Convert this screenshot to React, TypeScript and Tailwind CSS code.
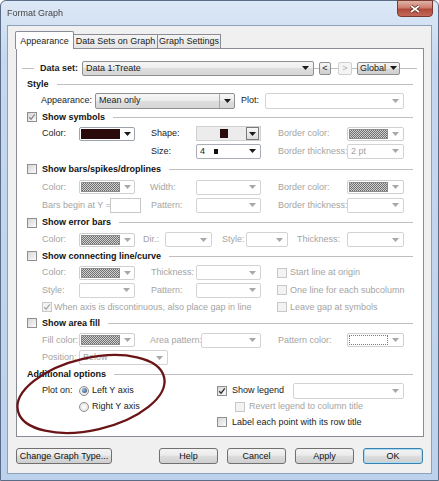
import React from "react";

type Kids = { children?: React.ReactNode };

function Arrow({ dis }: { dis?: boolean }) {
  return (
    <svg width="7" height="4" viewBox="0 0 7 4" className="shrink-0">
      <path d="M0 0H7L3.5 4Z" fill={dis ? "#a8a8a8" : "#1a1a1a"} />
    </svg>
  );
}

function Combo({ dis, size, children }: Kids & { dis?: boolean; size: string }) {
  return (
    <div
      className={`${size} shrink-0 flex items-center rounded-[2px] border pl-[3px] pr-[4px] bg-white ${
        dis ? "border-[#d3d3d3] text-[#a3a3a3]" : "border-[#a9aeb6]"
      }`}
    >
      <div className="flex-1 flex items-center min-w-0 whitespace-nowrap overflow-hidden">{children}</div>
      <Arrow dis={dis} />
    </div>
  );
}

function Swatch({ kind }: { kind: "dark" | "hatch" | "blank" }) {
  const inner =
    kind === "dark"
      ? "bg-[#2a0a0b]"
      : kind === "hatch"
      ? "border border-[#8c8c8c] bg-[repeating-conic-gradient(#707070_0_25%,#d0d0d0_0_50%)] bg-[length:2px_2px]"
      : "border border-dotted border-[#7a7a7a] bg-white";
  return (
    <div
      className={`h-[14px] w-full flex items-center rounded-[2px] border pl-[1px] bg-white ${
        kind === "dark" ? "border-[#9da3ab]" : "border-[#cfcfcf]"
      }`}
    >
      <div className={`h-[10px] w-[39px] ${inner}`} />
      <div className="flex-1 flex justify-center">
        <Arrow dis={kind !== "dark"} />
      </div>
    </div>
  );
}

function Check({ on, dis, ink = "#333" }: { on?: boolean; dis?: boolean; ink?: string }) {
  return (
    <div
      className={`w-[10px] h-[10px] shrink-0 border flex items-center justify-center ${
        dis ? "border-[#c8c8c8] bg-[#f3f3f3]" : "border-[#8f8f8f] bg-[linear-gradient(135deg,#d6d6d6,#fbfbfb)]"
      }`}
    >
      {on && (
        <svg width="8" height="8" viewBox="0 0 8 8">
          <path d="M1.2 4.2 3.1 6.2 6.8 1.4" fill="none" stroke={ink} strokeWidth="1.3" />
        </svg>
      )}
    </div>
  );
}

function Radio({ on }: { on?: boolean }) {
  return (
    <div className="w-[10px] h-[10px] shrink-0 rounded-full border border-[#8e8f8f] bg-[radial-gradient(circle,#ffffff,#dcdcdc)] flex items-center justify-center">
      {on && <div className="w-[5px] h-[5px] rounded-full bg-[radial-gradient(circle_at_35%_35%,#9ab6d8,#2c4a70)]" />}
    </div>
  );
}

function L({ w, dis, bold, children }: Kids & { w: string; dis?: boolean; bold?: boolean }) {
  return (
    <div
      className={`${w} shrink-0 whitespace-nowrap ${bold ? "font-bold" : ""} ${
        dis ? "text-[#a4a4a4]" : "text-[#1b1b1b]"
      }`}
    >
      {children}
    </div>
  );
}

function Row({ h, pl = "pl-[25px]", children }: Kids & { h: string; pl?: string }) {
  return <div className={`flex items-center ${h} ${pl}`}>{children}</div>;
}

function Heading({ h, check, ink, children }: Kids & { h: string; check?: boolean; ink?: string }) {
  return (
    <div className={`flex items-center pl-[10px] pr-[10px] ${h}`}>
      {check !== undefined && (
        <div className="mr-[5px]">
          <Check on={check} ink={ink} />
        </div>
      )}
      <span className="font-bold whitespace-nowrap text-[#111]">{children}</span>
      <div className="flex-1 h-px bg-[#bfbfbf] ml-[8px]" />
    </div>
  );
}

function Btn({ w, focus, children }: Kids & { w: string; focus?: boolean }) {
  return (
    <div
      className={`${w} h-[16px] rounded-[3px] border flex items-center justify-center text-[#111] bg-[linear-gradient(#f3f3f3,#ebebeb_45%,#dddddd_50%,#cfcfcf)] ${
        focus ? "border-[#3c7fb1] shadow-[inset_0_0_0_1px_#a6dcf5]" : "border-[#707070]"
      }`}
    >
      {children}
    </div>
  );
}

function SmallBtn({ w, dis, children }: Kids & { w: string; dis?: boolean }) {
  return (
    <div
      className={`${w} h-[13px] shrink-0 rounded-[2px] border flex items-center justify-center ${
        dis ? "border-[#cfcfcf] text-[#b0b0b0] bg-[#f4f4f4]" : "border-[#8e8f8f] bg-[linear-gradient(#f6f6f6,#e6e6e6_50%,#d8d8d8_50%,#d0d0d0)]"
      }`}
    >
      {children}
    </div>
  );
}

const Seg = ({ w }: { w: string }) => <div className={`${w} h-px bg-[#bfbfbf] shrink-0`} />;

export default function App() {
  return (
    <div className="w-[439px] h-[481px] relative font-['Liberation_Sans',Arial,sans-serif] text-[9px] leading-[11px] text-[#1b1b1b]">
      <div className="w-full h-full flex flex-col border border-[#5b6d86] rounded-t-[6px] bg-[linear-gradient(#dde8f6,#c5d8ef_60px,#bcd1ec)]">
        {/* title bar */}
        <div className="h-[24px] flex items-start shrink-0">
          <div className="flex-1 pl-[6px] pt-[7px] text-[#444] blur-[0.5px]">Format Graph</div>
          <div className="mr-[5px] w-[36px] h-[17px] -mt-px rounded-b-[4px] border border-[#7a3a30] bg-[linear-gradient(#e0b3a8,#cd7d6d_45%,#b04a3a_55%,#c4685a)] flex items-center justify-center">
            <svg width="12" height="10" viewBox="0 0 12 10">
              <path d="M2 2 10 8M10 2 2 8" stroke="#5a2018" strokeWidth="3.2" />
              <path d="M2 2 10 8M10 2 2 8" stroke="#ffffff" strokeWidth="1.6" />
            </svg>
          </div>
        </div>

        {/* client */}
        <div className="flex-1 mx-[6px] mb-[6px] border border-[#8da1bb] bg-[#f0f0f0] flex flex-col">
          {/* tabs */}
          <div className="flex items-end ml-[7px] mt-[5px] h-[17px]">
            <div className="relative z-10 w-[59px] h-[18px] -mb-px bg-white border border-b-0 border-[#898c95] rounded-t-[2px] flex items-center justify-center pt-[2px]">
              Appearance
            </div>
            <div className="w-[84px] h-[14px] border border-b-0 border-l-0 border-[#898c95] bg-[linear-gradient(#f4f4f4,#e4e4e4)] flex items-center justify-center">
              Data Sets on Graph
            </div>
            <div className="w-[63px] h-[14px] border border-b-0 border-l-0 border-[#898c95] bg-[linear-gradient(#f4f4f4,#e4e4e4)] flex items-center justify-center">
              Graph Settings
            </div>
          </div>

          {/* panel */}
          <div className="ml-[8px] w-[408px] h-[389px] border border-[#898c95] bg-white pt-[11px] flex flex-col">
            {/* data set */}
            <Row h="h-[16px]" pl="pl-[5px]">
              <Seg w="w-[12px]" />
              <div className="w-[6px]" />
              <L w="w-[42px]" bold>
                Data set:
              </L>
              <div className="w-[232px] h-[15px] shrink-0 flex items-center rounded-[2px] border border-[#8e8f8f] pl-[3px] pr-[4px] bg-[linear-gradient(#f7f7f7,#ececec_50%,#dedede_50%,#d6d6d6)]">
                <div className="flex-1">Data 1:Treate</div>
                <Arrow />
              </div>
              <Seg w="w-[5px]" />
              <SmallBtn w="w-[12px]">&lt;</SmallBtn>
              <Seg w="w-[7px]" />
              <SmallBtn w="w-[14px]" dis>
                &gt;
              </SmallBtn>
              <Seg w="w-[5px]" />
              <SmallBtn w="w-[43px]">
                <span className="mr-[4px]">Global</span>
                <Arrow />
              </SmallBtn>
              <Seg w="w-[17px]" />
            </Row>

            <Heading h="h-[16px]">Style</Heading>

            <Row h="h-[17px]" pl="pl-[24px]">
              <L w="w-[54px]">Appearance:</L>
              <div className="w-[140px] h-[16px] shrink-0 flex rounded-[2px] border border-[#8e8f8f] bg-[linear-gradient(#f7f7f7,#ececec_50%,#dedede_50%,#d6d6d6)]">
                <div className="flex-1 pl-[3px] flex items-center">Mean only</div>
                <div className="w-[15px] border-l border-[#a9a9a9] flex items-center justify-center">
                  <Arrow />
                </div>
              </div>
              <div className="w-[6px]" />
              <L w="w-[24px]">Plot:</L>
              <Combo dis size="w-[139px] h-[16px]" />
            </Row>

            <Heading h="h-[16px]" check ink="#8a8a8a">
              Show symbols
            </Heading>

            <Row h="h-[17px]">
              <L w="w-[37px]">Color:</L>
              <div className="w-[56px] shrink-0">
                <Swatch kind="dark" />
              </div>
              <div className="w-[16px]" />
              <L w="w-[45px]">Shape:</L>
              <div className="w-[65px] h-[15px] shrink-0 flex items-center border border-[#d0d0d0] bg-[#ececec]">
                <div className="flex-1 flex justify-center pl-[4px]">
                  <div className="w-[8px] h-[9px] bg-[#2a0a0b]" />
                </div>
                <div className="w-[13px] h-[13px] mr-px border border-[#7a7a7a] bg-[linear-gradient(#f8f8f8,#dcdcdc)] flex items-center justify-center">
                  <Arrow />
                </div>
              </div>
              <div className="w-[17px]" />
              <L w="w-[69px]" dis>
                Border color:
              </L>
              <div className="w-[57px] shrink-0">
                <Swatch kind="hatch" />
              </div>
            </Row>

            <Row h="h-[18px]">
              <div className="w-[109px] shrink-0" />
              <L w="w-[45px]">Size:</L>
              <Combo size="w-[65px] h-[15px]">
                <span className="w-[14px]">4</span>
                <div className="w-[4px] h-[5px] bg-[#111]" />
              </Combo>
              <div className="w-[17px]" />
              <L w="w-[69px]" dis>
                Border thickness:
              </L>
              <Combo dis size="w-[57px] h-[15px]">
                2 pt
              </Combo>
            </Row>

            <Heading h="h-[18px]" check={false}>
              Show bars/spikes/droplines
            </Heading>

            <Row h="h-[18px]">
              <L w="w-[37px]" dis>
                Color:
              </L>
              <div className="w-[56px] shrink-0">
                <Swatch kind="hatch" />
              </div>
              <div className="w-[15px]" />
              <L w="w-[46px]" dis>
                Width:
              </L>
              <Combo dis size="w-[65px] h-[15px]" />
              <div className="w-[17px]" />
              <L w="w-[69px]" dis>
                Border color:
              </L>
              <div className="w-[57px] shrink-0">
                <Swatch kind="hatch" />
              </div>
            </Row>

            <Row h="h-[18px]">
              <L w="w-[68px]" dis>
                Bars begin at Y =
              </L>
              <div className="w-[31px] h-[15px] shrink-0 border border-[#c9c9c9] bg-white" />
              <div className="w-[10px]" />
              <L w="w-[45px]" dis>
                Pattern:
              </L>
              <Combo dis size="w-[65px] h-[15px]" />
              <div className="w-[17px]" />
              <L w="w-[69px]" dis>
                Border thickness:
              </L>
              <Combo dis size="w-[57px] h-[15px]" />
            </Row>

            <Heading h="h-[17px]" check={false}>
              Show error bars
            </Heading>

            <Row h="h-[17px]">
              <L w="w-[37px]" dis>
                Color:
              </L>
              <div className="w-[56px] shrink-0">
                <Swatch kind="hatch" />
              </div>
              <div className="w-[8px]" />
              <L w="w-[22px]" dis>
                Dir.:
              </L>
              <Combo dis size="w-[47px] h-[15px]" />
              <div className="w-[10px]" />
              <L w="w-[24px]" dis>
                Style:
              </L>
              <Combo dis size="w-[42px] h-[15px]" />
              <div className="w-[9px]" />
              <L w="w-[50px]" dis>
                Thickness:
              </L>
              <Combo dis size="w-[57px] h-[15px]" />
            </Row>

            <Heading h="h-[16px]" check={false}>
              Show connecting line/curve
            </Heading>

            <Row h="h-[17px]">
              <L w="w-[37px]" dis>
                Color:
              </L>
              <div className="w-[56px] shrink-0">
                <Swatch kind="hatch" />
              </div>
              <div className="w-[16px]" />
              <L w="w-[45px]" dis>
                Thickness:
              </L>
              <Combo dis size="w-[65px] h-[15px]" />
              <div className="w-[16px]" />
              <Check dis />
              <L w="w-[120px] ml-[3px]" dis>
                Start line at origin
              </L>
            </Row>

            <Row h="h-[18px]">
              <L w="w-[37px]" dis>
                Style:
              </L>
              <Combo dis size="w-[56px] h-[15px]" />
              <div className="w-[16px]" />
              <L w="w-[45px]" dis>
                Pattern:
              </L>
              <Combo dis size="w-[65px] h-[15px]" />
              <div className="w-[16px]" />
              <Check dis />
              <L w="w-[120px] ml-[3px]" dis>
                One line for each subcolumn
              </L>
            </Row>

            <Row h="h-[16px]">
              <div className="w-[235px] shrink-0 flex items-center">
                <Check dis on ink="#a8a8a8" />
                <L w="w-auto ml-[2px]" dis>
                  When axis is discontinuous, also place gap in line
                </L>
              </div>
              <Check dis />
              <L w="w-[120px] ml-[3px]" dis>
                Leave gap at symbols
              </L>
            </Row>

            <Heading h="h-[16px]" check={false}>
              Show area fill
            </Heading>

            <Row h="h-[18px]">
              <L w="w-[37px]" dis>
                Fill color:
              </L>
              <div className="w-[56px] shrink-0">
                <Swatch kind="hatch" />
              </div>
              <div className="w-[15px]" />
              <L w="w-[51px]" dis>
                Area pattern:
              </L>
              <Combo dis size="w-[60px] h-[15px]" />
              <div className="w-[17px]" />
              <L w="w-[69px]" dis>
                Pattern color:
              </L>
              <div className="w-[57px] shrink-0">
                <Swatch kind="blank" />
              </div>
            </Row>

            <Row h="h-[17px]">
              <L w="w-[37px]" dis>
                Position:
              </L>
              <Combo dis size="w-[89px] h-[15px]">
                Below
              </Combo>
            </Row>

            <Heading h="h-[16px]">Additional options</Heading>

            <Row h="h-[17px]">
              <div className="w-[175px] shrink-0 flex items-center">
                <L w="w-[37px]">Plot on:</L>
                <Radio on />
                <L w="w-auto ml-[3px]">Left Y axis</L>
              </div>
              <Check on ink="#2f2f2f" />
              <L w="w-[61px] ml-[5px]">Show legend</L>
              <Combo dis size="w-[111px] h-[16px]" />
            </Row>

            <Row h="h-[15px]">
              <div className="w-[193px] shrink-0 flex items-center">
                <div className="w-[37px] shrink-0" />
                <Radio />
                <L w="w-auto ml-[3px]">Right Y axis</L>
              </div>
              <Check dis />
              <L w="w-[150px] ml-[4px]" dis>
                Revert legend to column title
              </L>
            </Row>

            <Row h="h-[16px]">
              <div className="w-[175px] shrink-0" />
              <Check />
              <L w="w-[160px] ml-[5px]">Label each point with its row title</L>
            </Row>
          </div>

          {/* buttons */}
          <div className="flex items-center justify-between px-[8px] mt-[11px]">
            <Btn w="w-[96px]">Change Graph Type...</Btn>
            <div className="flex gap-[9px]">
              <Btn w="w-[59px]">Help</Btn>
              <Btn w="w-[59px]">Cancel</Btn>
              <Btn w="w-[59px]">Apply</Btn>
              <Btn w="w-[60px]" focus>
                OK
              </Btn>
            </div>
          </div>
        </div>
      </div>

      {/* hand-drawn highlight */}
      <svg className="absolute left-0 top-0 pointer-events-none" width="439" height="481" viewBox="0 0 439 481">
        <ellipse
          cx="91"
          cy="394"
          rx="75"
          ry="36"
          transform="rotate(-13 91 394)"
          fill="none"
          stroke="#6a1416"
          strokeWidth="2.3"
        />
      </svg>
    </div>
  );
}
